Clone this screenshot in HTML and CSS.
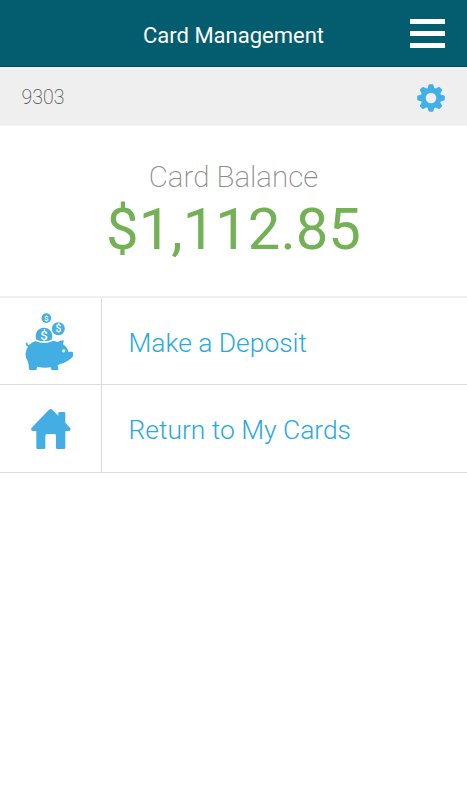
FILE: index.html
```
<!DOCTYPE html>
<html lang="en">
<head>
    <meta charset="UTF-8">
    <meta name="viewport" content="width=device-width, initial-scale=1.0">
    <title>Card Management</title>
    <link rel="stylesheet" href="styles.css">
</head>
<body>
    <header class="header">
        <h1 class="title">Card Management</h1>
        <button class="menu" aria-label="Menu">
            <span></span>
            <span></span>
            <span></span>
        </button>
    </header>
    <div class="card-bar">
        <span class="card-number">9303</span>
        <svg class="gear" viewBox="-14 -14 28 28">
            <g fill="#41b0e6">
                <path id="tooth" d="M-3.6-9 -2.4-13.1Q-2.2-13.8-1.5-13.8H1.5Q2.2-13.8 2.4-13.1L3.6-9V9L2.4 13.1Q2.2 13.8 1.5 13.8H-1.5Q-2.2 13.8-2.4 13.1L-3.6 9Z"/>
                <use href="#tooth" transform="rotate(45)"/>
                <use href="#tooth" transform="rotate(90)"/>
                <use href="#tooth" transform="rotate(135)"/>
                <circle r="10.4"/>
            </g>
            <circle r="5.3" fill="#efefef"/>
        </svg>
    </div>
    <section class="balance">
        <h2 class="balance-label">Card Balance</h2>
        <p class="balance-amount">$1,112.85</p>
    </section>
    <nav class="actions">
        <a class="action" href="#">
            <span class="action-icon">
                <svg class="pig" viewBox="45 38 147 173">
                    <g fill="#43aee4">
                        <circle cx="109" cy="53.5" r="14.5"/>
                        <circle cx="145" cy="85" r="19.5"/>
                        <path d="M80 119A25 25 0 1 1 124 119Q102 127 80 119Z"/>
                        <path d="M58 208 54 184Q45 172 47 158Q48 146 54 139Q45 136 48 127L53 126Q50 132 57 134Q66 125 77 122Q102 133 127 122Q135 121 143 125Q150 120 160 120Q163 121 160 126L159 132Q172 141 175 154L186 154Q190 154 189 159V168Q188 172 181 176Q170 186 148 192L143 195 145 207Q145 210 142 210H127Q124 210 124 207L122 201Q102 204 81 199L80 207Q80 210 77 210H61Q58 210 58 208Z"/>
                    </g>
                    <path d="M77 120.500Q102 130 127 120.500" fill="none" stroke="#fff" stroke-width="3"/>
                    <circle cx="161" cy="151.500" r="4.800" fill="#fff"/>
                    <g class="coin-sign">
                        <text x="109" y="62" font-size="24">$</text>
                        <text x="145" y="96" font-size="31">$</text>
                        <text x="102" y="119" font-size="40">$</text>
                    </g>
                </svg>
            </span>
            <span class="action-text">Make a Deposit</span>
        </a>
        <a class="action" href="#">
            <span class="action-icon">
                <svg class="house" viewBox="62 87 120 121">
                    <path fill="#43aee4" d="M116 89Q121 85 126 89L144 107V100Q144 96 148 96H161Q165 96 165 100V128L179 143Q182 146 180 150Q179 153 175 153H165V203Q165 207 161 207H141Q137 207 137 203V167Q137 162 132 162H110Q105 162 105 167V203Q105 207 101 207H82Q78 207 78 203V153H68Q64 153 63 150Q61 146 64 143Z"/>
                </svg>
            </span>
            <span class="action-text">Return to My Cards</span>
        </a>
    </nav>
</body>
</html>
```
FILE: styles.css
```
body {
    margin: 0;
    font-family: Roboto, sans-serif;
    background-color: #fff;
}
.header {
    display: grid;
    grid-template-columns: 57px 1fr 57px;
    align-items: center;
    height: 67px;
    box-sizing: border-box;
    border-bottom: 1px solid #034663;
    background-color: #045d6f;
    color: #fff;
}
.title {
    grid-column: 2;
    margin: 4px 0 0;
    font-size: 22px;
    font-weight: 400;
    text-align: center;
}
.menu {
    display: flex;
    flex-direction: column;
    gap: 7px;
    width: 35px;
    margin-top: 1px;
    padding: 0;
    border: none;
    background: none;
}
.menu span {
    width: 35px;
    height: 5px;
    background-color: #fff;
}
.card-bar {
    display: flex;
    justify-content: space-between;
    align-items: center;
    height: 59px;
    padding: 0 22.5px 0 21.5px;
    border-bottom: 1px solid #f5f5f5;
    box-sizing: border-box;
    background-color: #efefef;
}
.card-number {
    margin-top: 3px;
    color: #555;
    font-size: 19.5px;
    font-weight: 200;
}
.gear {
    width: 28px;
    height: 28px;
    margin-top: 3px;
}
.balance {
    height: 170px;
    padding-top: 34px;
    box-sizing: border-box;
    text-align: center;
}
.balance-label {
    margin: 0;
    color: #8c8c8c;
    font-size: 29.5px;
    font-weight: 200;
    line-height: 34px;
}
.balance-amount {
    margin: 0;
    color: #72b154;
    font-size: 58px;
    line-height: 70px;
}
.actions {
    border-top: 2px solid #f0f0f0;
}
.action {
    display: flex;
    height: 88px;
    box-sizing: border-box;
    border-bottom: 1px solid #dcdcdc;
    color: #27a9e1;
    text-decoration: none;
}
.action:first-child {
    height: 87px;
}
.action-icon {
    display: flex;
    justify-content: center;
    align-items: center;
    width: 101px;
    border-right: 1px solid #dcdcdc;
}
.action-text {
    padding-left: 26.5px;
    font-size: 26.4px;
    font-weight: 300;
    line-height: 90px;
}
.pig {
    width: 49px;
    height: 57.7px;
    margin: 1px 3px 0 0;
}
.house {
    width: 40px;
    height: 40.3px;
    margin-top: 1px;
}
.coin-sign {
    fill: #fff;
    font-weight: 500;
    text-anchor: middle;
}
```
